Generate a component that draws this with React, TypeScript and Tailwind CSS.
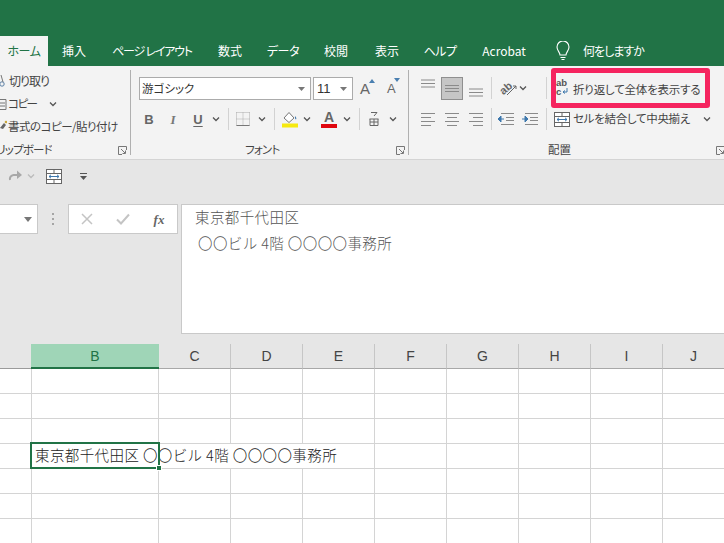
const Chev = ({ c = "#555" }: { c?: string }) => (
  <svg width="8" height="6" viewBox="0 0 8 6" fill="none"><path d="M1 1.5 4 4.5 7 1.5" stroke={c} strokeWidth="1.3" /></svg>
);
const Launcher = () => (
  <svg width="9" height="9" viewBox="0 0 9 9" fill="none" stroke="#777">
    <path d="M8.5 4V.5H.5v8H4" /><path d="M3 3l4 4M7.5 4.5v3h-3" />
  </svg>
);
const Lines = ({ x = [[1, 15], [1, 15], [1, 15]], y = [1.5, 4.5, 7.5], w = 16, h = 9 }: { x?: number[][]; y?: number[]; w?: number; h?: number }) => (
  <svg width={w} height={h} viewBox={`0 0 ${w} ${h}`} stroke="#8a8a8a" strokeWidth="1">
    {y.map((yy, i) => <path key={i} d={`M${x[i % x.length][0]} ${yy}H${x[i % x.length][1]}`} />)}
  </svg>
);
const Row4 = ({ x }: { x: number[][] }) => <Lines x={x} y={[1.5, 5.5, 9.5, 13.5]} w={16} h={15} />;
const Indent = ({ right }: { right?: boolean }) => (
  <svg width="18" height="14" viewBox="0 0 18 14" fill="none">
    <path d="M4 1.5H17M9 5.5H17M9 8.5H17M4 12.5H17" stroke="#8a8a8a" />
    {right
      ? <path d="M1 7H5M4 4l3 3-3 3z" stroke="#3e78ad" fill="#3e78ad" />
      : <path d="M7 7H3M4 4 1 7l3 3z" stroke="#3e78ad" fill="#3e78ad" />}
  </svg>
);
const Merge = () => (
  <svg width="16" height="15" viewBox="0 0 16 15" fill="none">
    <rect x=".5" y=".5" width="15" height="14" stroke="#666" fill="#fff" />
    <path d="M.5 4.5h15M.5 10.5h15M8 .5v4M8 10.5v4" stroke="#666" />
    <path d="M3 7.5h10M5 5.8 3 7.5l2 1.7M11 5.8l2 1.7-2 1.7" stroke="#3e78ad" />
  </svg>
);
const Bg = ({ className, children }: { className: string; children?: React.ReactNode }) => (
  <div className={`flex items-center justify-center ${className}`}>{children}</div>
);
const Sep = () => <div className="w-px h-[22px] bg-[#d2d2d2] mx-auto" />;
const Divider = () => <div className="w-px h-[85px] mt-[4px] bg-[#b0b0b0] shrink-0" />;

const cols = ["C", "D", "E", "F", "G", "H", "I", "J"];
const Cell = () => <div className="border-b border-r border-[#d4d4d4]" />;
const FirstCell = () => <div className="border-b border-[#d4d4d4]" />;
const BCell = () => <div className="border-b border-r border-l border-[#d4d4d4]" />;

export default function App() {
  return (
    <div className="w-[724px] h-[543px] overflow-hidden bg-white text-[#444] [font-family:'Noto_Sans_CJK_JP','Noto_Sans',sans-serif] [font-feature-settings:'palt'] text-[11.5px] leading-none">
      <div className="h-[36px] bg-[#217346]" />
      <div className="h-[30px] bg-[#217346] flex text-white text-[12px]">
        <Bg className="w-[48px] bg-[#f3f3f3] text-[#217346] tracking-[-0.5px]">ホーム</Bg>
        <Bg className="w-[52px]">挿入</Bg>
        <Bg className="w-[104px] tracking-[-1.2px] whitespace-nowrap">ページ レイアウト</Bg>
        <Bg className="w-[52px]">数式</Bg>
        <Bg className="w-[54px] tracking-[-0.5px]">データ</Bg>
        <Bg className="w-[52px]">校閲</Bg>
        <Bg className="w-[50px]">表示</Bg>
        <Bg className="w-[56px] tracking-[-0.5px]">ヘルプ</Bg>
        <Bg className="w-[72px]">Acrobat</Bg>
        <div className="flex items-center ml-[15px]">
          <svg width="16" height="20" viewBox="0 0 16 20" fill="none" stroke="#fff" strokeWidth="1.1">
            <path d="M5 14c0-3-3-4-3-8a6 6 0 0 1 12 0c0 4-3 5-3 8zM5.500 16.500h5M6.500 18.500h3" />
          </svg>
          <span className="ml-[12px] tracking-[-1px]">何をしますか</span>
        </div>
      </div>

      <div className="h-[94px] bg-[#f3f3f3] border-b border-[#d4d4d4] flex overflow-hidden">
        {/* Clipboard */}
        <div className="w-[130px] shrink-0 flex flex-col">
          <div className="h-[75px] pt-[8px] flex flex-col gap-[9px] tracking-[-0.5px]">
            <div className="h-[14px] flex items-center">
              <svg width="8" height="14" viewBox="0 0 8 14" fill="none" stroke="#5a7fa5" className="shrink-0"><circle cx="2" cy="10" r="2.200" /><path d="M3 8 1 1" stroke="#777" /></svg>
              <span className="ml-[1px] tracking-[-1px] text-[12px]">切り取り</span>
            </div>
            <div className="h-[14px] flex items-center">
              <svg width="7" height="14" viewBox="0 0 7 14" fill="none" stroke="#777" className="shrink-0"><path d="M-3 2.500h9v10h-9z" /><path d="M0 6h5M0 9h5" /></svg>
              <span className="ml-[1px] w-[26px] tracking-[-1.5px] whitespace-nowrap">コピー</span>
              <span className="ml-[15px]"><Chev /></span>
            </div>
            <div className="h-[14px] flex items-center">
              <svg width="7" height="14" viewBox="0 0 7 14" className="shrink-0"><path d="M0 8 4 3l2 2-3 4z" fill="#666" /><circle cx="6" cy="2" r="1.300" fill="#c9a83d" /></svg>
              <span className="ml-[1px] whitespace-nowrap">書式のコピー/貼り付け</span>
            </div>
          </div>
          <div className="h-[18px] flex items-center justify-between pr-[3px]">
            <span className="w-[52px] overflow-hidden whitespace-nowrap flex justify-end tracking-[-0.8px]">クリップボード</span>
            <Launcher />
          </div>
        </div>
        <Divider />

        {/* Font */}
        <div className="w-[277px] shrink-0 flex flex-col pl-[8px]">
          <div className="h-[75px] pt-[11px]">
            <div className="flex items-center h-[23px]">
              <div className="w-[172px] h-[23px] bg-white border border-[#ababab] flex items-center justify-between pl-[2px] pr-[5px] text-[#333]">
                <span>游ゴシック</span>
                <svg width="7" height="4" viewBox="0 0 7 4"><path d="M0 0h7L3.500 4z" fill="#777" /></svg>
              </div>
              <div className="ml-[2px] w-[40px] h-[23px] bg-white border border-[#ababab] flex items-center justify-between pl-[3px] pr-[5px] text-[#333] text-[13px] [font-family:'Liberation_Sans',sans-serif]">
                <span>11</span>
                <svg width="7" height="4" viewBox="0 0 7 4"><path d="M0 0h7L3.500 4z" fill="#777" /></svg>
              </div>
              <div className="ml-[7px] flex items-center gap-[13px] [font-family:'Liberation_Sans',sans-serif] text-[#666]">
                <span className="relative text-[15px] w-[14px]">A<svg className="absolute -top-[2px] left-[9px]" width="6" height="4" viewBox="0 0 6 4"><path d="M0 4 3 0l3 4z" fill="#4a7fb0" /></svg></span>
                <span className="relative text-[13px] w-[14px]">A<svg className="absolute -top-[4px] left-[7px]" width="6" height="4" viewBox="0 0 6 4"><path d="M0 0h6L3 4z" fill="#4a7fb0" /></svg></span>
              </div>
            </div>
            <div className="mt-[7px] h-[24px] grid grid-cols-[20px_28px_22px_14px_10px_20px_18px_6px_26px_8px_8px_20px_16px_8px_22px_16px] items-center justify-items-center text-[#666] [font-family:'Liberation_Sans',sans-serif] text-[13px]">
              <b>B</b>
              <i className="[font-family:'Liberation_Serif',serif] font-bold text-[#777]">I</i>
              <b className="underline underline-offset-[2px]">U</b>
              <Chev />
              <Sep />
              <svg width="14" height="14" viewBox="0 0 14 14" fill="none" stroke="#aaa" strokeDasharray="1 1"><path d="M.5.5h13M.5 7h13M.5.5v13M7 .5v13M13.500.5v13" /><path d="M.5 13.500h13" strokeDasharray="none" stroke="#777" /></svg>
              <Chev />
              <Sep />
              <svg width="16" height="17" viewBox="0 0 16 17" fill="none"><path d="M7 1.500 12 7l-5 4.500L2 7z" stroke="#777" fill="#fff" /><path d="M13 5c1.200 1.200 1.700 2.500 1 3.500-1-.5-1.200-1.500-1-3.500z" fill="#3e78ad" /><rect y="12.500" width="16" height="4" fill="#f6e90f" /></svg>
              <Chev />
              <span />
              <span className="relative flex justify-center w-[16px] h-[17px]"><b className="text-[14px] text-[#666] -mt-[1px]">A</b><span className="absolute bottom-0 left-0 w-[16px] h-[4px] bg-[#e0060f]" /></span>
              <Chev />
              <Sep />
              <svg width="12" height="16" viewBox="0 0 12 16" fill="none" stroke="#666"><path d="M3 1.500h6L6 5M1.500 8h9M2 11h8M2 14.500h8M2 8v6.500M10 8v6.500M6 8v6.500" /></svg>
              <Chev />
            </div>
          </div>
          <div className="h-[18px] flex items-center relative">
            <span className="ml-[106px] tracking-[-0.8px]">フォント</span>
            <span className="absolute right-[3px] top-[5px] flex"><Launcher /></span>
          </div>
        </div>
        <Divider />

        {/* Alignment */}
        <div className="flex-1 flex flex-col relative">
          <div className="h-[75px] flex">
            <div className="w-[141px] shrink-0 pl-[7px] pt-[10px]">
              <div className="h-[24px] grid grid-cols-[24px_24px_24px_6px_48px_8px] items-center justify-items-center">
                <Bg className="w-[20px] h-[24px] pb-[10px]"><Lines y={[1, 4.5, 8]} h={9} /></Bg>
                <Bg className="w-[22px] h-[23px] bg-[#c6c6c6] border border-[#8f8f8f]"><Lines y={[1.5, 4.5, 7.5]} /></Bg>
                <Bg className="w-[20px] h-[24px] pt-[9px]"><Lines y={[1, 4.5, 8]} h={9} /></Bg>
                <div className="w-px h-[22px] bg-[#d2d2d2]" />
                <div className="flex items-center gap-[2px] justify-self-start ml-[5px]">
                  <svg width="18" height="18" viewBox="0 0 18 18" fill="none"><text x="1" y="13" fontSize="11" fontWeight="700" fill="#666" transform="rotate(-40 7 10)" fontFamily="Liberation Sans">ab</text><path d="M8 16 17 7M14 7h3v3" stroke="#666" /></svg>
                  <Chev />
                </div>
                <div className="w-px h-[22px] bg-[#d2d2d2]" />
              </div>
              <div className="mt-[7px] h-[24px] grid grid-cols-[24px_24px_24px_6px_24px_24px_8px] items-center justify-items-center">
                <Row4 x={[[1, 15], [1, 11], [1, 15], [1, 11]]} />
                <Row4 x={[[1, 15], [3, 13], [1, 15], [3, 13]]} />
                <Row4 x={[[1, 15], [5, 15], [1, 15], [5, 15]]} />
                <div className="w-px h-[22px] bg-[#d2d2d2]" />
                <Indent />
                <Indent right />
                <div className="w-px h-[22px] bg-[#d2d2d2]" />
              </div>
            </div>
            <div className="pt-[2px] pl-px">
              <div className="w-[159px] h-[40px] border-[5px] border-[#f5245f] rounded-[3px] flex items-center">
                <svg width="15" height="22" viewBox="0 0 15 22" className="shrink-0 -ml-px">
                  <text x="1" y="9" fontSize="9.500" fontWeight="700" fill="#555" fontFamily="Liberation Sans">ab</text>
                  <text x="1" y="18" fontSize="9.500" fontWeight="700" fill="#555" fontFamily="Liberation Sans">c</text>
                  <path d="M12 11v4H8M10 13.500 8 15l2 1.500" stroke="#3e78ad" fill="none" />
                </svg>
                <span className="ml-[3px] mt-[3px] whitespace-nowrap tracking-[-0.2px]">折り返して全体を表示する</span>
              </div>
              <div className="mt-[3px] h-[16px] flex items-center pl-[3px]">
                <Merge />
                <span className="ml-[3px] whitespace-nowrap tracking-[-0.3px]">セルを結合して中央揃え</span>
                <span className="ml-[13px]"><Chev /></span>
              </div>
            </div>
          </div>
          <div className="h-[18px] flex items-center">
            <span className="ml-[139px]">配置</span>
            <span className="absolute left-[307px] top-[80px] flex"><Launcher /></span>
          </div>
        </div>
      </div>

      {/* QAT */}
      <div className="h-[44px] bg-[#e6e6e6] pt-[7px]">
        <div className="h-[18px] flex items-center pl-[7px]">
          <svg width="16" height="14" viewBox="0 0 16 14" fill="none"><path d="M13 6H6.500A4 4 0 0 0 3 11" stroke="#a8a8a8" strokeWidth="2" /><path d="M10 1.500 15 6l-5 4z" fill="#a8a8a8" /></svg>
          <span className="ml-[4px]"><Chev c="#bbb" /></span>
          <span className="ml-[11px] flex"><Merge /></span>
          <svg className="ml-[18px]" width="7" height="8" viewBox="0 0 7 8"><path d="M0 1.500h7" stroke="#555" /><path d="M0 4h7L3.500 8z" fill="#555" /></svg>
        </div>
      </div>

      {/* Formula bar */}
      <div className="h-[129px] bg-[#e6e6e6] flex items-start">
        <div className="w-[38px] h-[30px] bg-white border border-l-0 border-[#c9c9c9] flex items-center justify-end pr-[5px]">
          <svg width="8" height="5" viewBox="0 0 8 5"><path d="M0 0h8L4 5z" fill="#777" /></svg>
        </div>
        <div className="w-[30px] h-[30px] flex flex-col items-center justify-center gap-[3px]">
          <span className="w-[2px] h-[2px] bg-[#a5a5a5]" /><span className="w-[2px] h-[2px] bg-[#a5a5a5]" /><span className="w-[2px] h-[2px] bg-[#a5a5a5]" />
        </div>
        <div className="w-[110px] h-[30px] bg-white border border-[#c9c9c9] flex items-center">
          <Bg className="w-[36px]"><svg width="12" height="12" viewBox="0 0 12 12" stroke="#c4c4c4" strokeWidth="1.500"><path d="M1 1l10 10M11 1 1 11" /></svg></Bg>
          <Bg className="w-[36px]"><svg width="14" height="12" viewBox="0 0 14 12" fill="none" stroke="#c4c4c4" strokeWidth="2"><path d="M1 6.500 5 10.500 13 1.500" /></svg></Bg>
          <Bg className="w-[36px] [font-family:'Liberation_Serif',serif] italic font-bold text-[13px] text-[#666]">fx</Bg>
        </div>
        <div className="ml-[3px] flex-1 h-[130px] bg-white border border-r-0 border-[#c9c9c9] pl-[13px] text-[14.500px] text-[#555] leading-[24px] tracking-[0.4px] whitespace-nowrap [font-feature-settings:normal] font-light">
          <div>東京都千代田区</div>
          <div className="pl-[3px] mt-[2px]">〇〇ビル 4階 〇〇〇〇事務所</div>
        </div>
      </div>

      <div className="h-[11px] bg-[#e6e6e6]" />

      {/* Sheet */}
      <div className="grid grid-cols-[31px_128px_72px_72px_72px_72px_72px_72px_72px_62px] grid-rows-[25px_25px_25px_25px_25px_25px_25px_25px] [font-feature-settings:normal]">
        <div className="bg-[#e6e6e6] border-b border-[#9a9a9a]" />
        <Bg className="bg-[#9fd5b7] border-b-2 border-[#217346] text-[#217346] text-[14px] [font-family:'Liberation_Sans',sans-serif]">B</Bg>
        {cols.map((c) => (
          <Bg key={c} className="bg-[#e6e6e6] border-b border-r border-[#a8a8a8] border-r-[#c6c6c6] text-[14px] text-[#444] [font-family:'Liberation_Sans',sans-serif]">{c}</Bg>
        ))}
        {[0, 1, 2, 3, 4, 5, 6].map((r) =>
          r === 3 ? (
            <div key={r} className="contents">
              <FirstCell />
              <div className="col-span-4 border-b border-r border-l border-[#d4d4d4] relative flex items-center pl-[3px] pb-[2px] text-[14.500px] text-[#222] tracking-[0.4px] font-light whitespace-nowrap">
                東京都千代田区 〇〇ビル 4階 〇〇〇〇事務所
                <div className="absolute -left-[2px] -top-[2px] w-[130px] h-[27px] border-2 border-[#217346]" />
                <div className="absolute left-[124px] top-[21px] w-[6px] h-[6px] bg-[#217346] border border-white" />
              </div>
              {[0, 1, 2, 3, 4].map((c) => <Cell key={c} />)}
            </div>
          ) : (
            <div key={r} className="contents">
              <FirstCell />
              <BCell />
              {[0, 1, 2, 3, 4, 5, 6, 7].map((c) => <Cell key={c} />)}
            </div>
          )
        )}
      </div>
    </div>
  );
}
